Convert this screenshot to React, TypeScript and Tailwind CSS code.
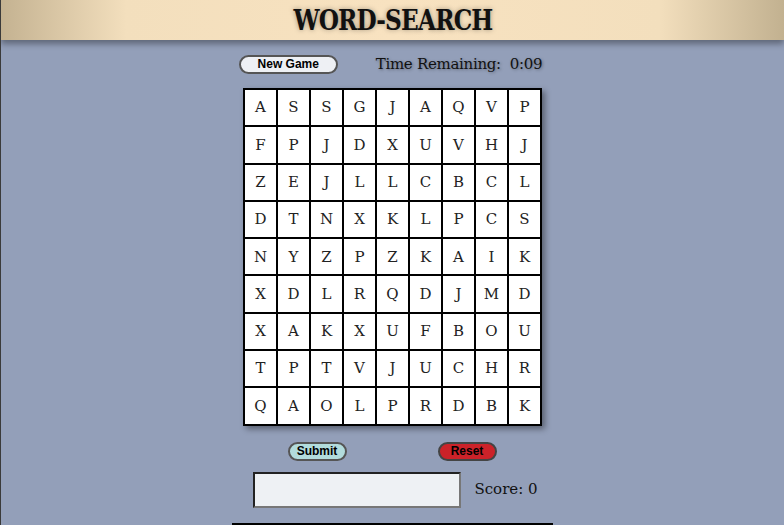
const rows = [
  'ASSGJAQVP',
  'FPJDXUVHJ',
  'ZEJLLCBCL',
  'DTNXKLPCS',
  'NYZPZKAIK',
  'XDLRQDJMD',
  'XAKXUFBOU',
  'TPTVJUCHR',
  'QAOLPRDBK',
]

const serif = { fontFamily: '"DejaVu Serif", "Liberation Serif", serif' }
const sans = { fontFamily: '"Liberation Sans", Arial, sans-serif' }

export default function App() {
  return (
    <div className="min-h-[525px] w-full overflow-hidden border-l border-[#3a3a3a] bg-[#939fb9]" style={serif}>
      <header className="relative z-10 flex h-10 items-center justify-center bg-[linear-gradient(90deg,#c4b291_0%,#f3dfbd_16%,#f8e2c0_50%,#f3dfbd_84%,#c2b190_100%)] shadow-[0_4px_6px_rgba(0,0,0,0.35)]">
        <h1 className="mt-[2px] scale-x-[0.83] text-[28px] font-bold tracking-[-1px] text-[#111] [text-shadow:0_0_6px_rgba(0,0,0,0.35)]">
          WORD-SEARCH
        </h1>
      </header>

      <main className="flex flex-col items-center">
        <div className="mt-[15px] flex h-[18px] items-center gap-[38px] pr-[4px]">
          <button
            className="h-[19px] w-[99px] rounded-full border-2 border-[#555] bg-[#eef0f4] text-[12px] font-bold leading-none text-black"
            style={sans}
          >
            New Game
          </button>
          <div className="text-[15px] tracking-[-0.3px] text-[#111] [text-shadow:1px_1px_3px_rgba(0,0,0,0.35)]">
            Time Remaining:&nbsp;&nbsp;0:09
          </div>
        </div>

        <div className="mt-[15px] grid grid-cols-[repeat(9,31px)] grid-rows-[repeat(9,35.3px)] gap-[2px] border-2 border-black bg-black shadow-[3px_3px_6px_rgba(0,0,0,0.4)]">
          {rows.flatMap((r, i) =>
            r.split('').map((ch, j) => (
              <div key={`${i}-${j}`} className="flex items-center justify-center bg-white text-[15px] text-[#222]">
                {ch}
              </div>
            )),
          )}
        </div>

        <div className="mt-[16px] flex gap-[91px] pr-[1px]" style={sans}>
          <button className="h-[19px] w-[59px] rounded-full border-2 border-[#555] bg-[#b2dcdc] text-[12px] font-bold leading-none text-black">
            Submit
          </button>
          <button className="h-[19px] w-[59px] rounded-full border-2 border-[#444] bg-[#cc2229] text-[12px] font-bold leading-none text-black">
            Reset
          </button>
        </div>

        <div className="mt-[11px] flex items-center gap-[13px] pl-[6px]">
          <input
            className="h-[36px] w-[208px] border-2 border-b-[#777] border-l-[#222] border-r-[#777] border-t-[#222] bg-[#eef1f4] outline-none"
            readOnly
          />
          <div className="text-[15px] text-[#111]">Score: 0</div>
        </div>

        <div className="mt-[15px] h-[30px] w-[321px] border-2 border-black bg-[#eef1f4]" />
      </main>
    </div>
  )
}
